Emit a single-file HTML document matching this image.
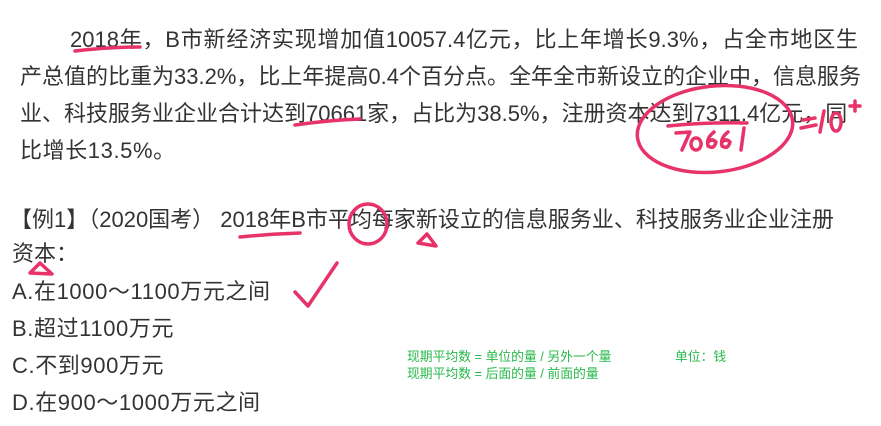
<!DOCTYPE html>
<html><head><meta charset="utf-8"><style>
body{margin:0;width:881px;height:426px;background:#fff;overflow:hidden;position:relative;font-family:"Liberation Sans","Noto Sans CJK SC",sans-serif;color:#333;}
.l{position:absolute;font-size:22px;line-height:24px;white-space:nowrap;}
.o{letter-spacing:0.6px;}
.j{text-align:justify;text-align-last:justify;}
.g{position:absolute;font-size:12.8px;line-height:15px;color:#27b84a;white-space:nowrap;}
svg{position:absolute;left:0;top:0;}
</style></head><body>
<div class="l j" style="left:70px;top:28px;width:788px">2018年，B市新经济实现增加值10057.4亿元，比上年增长9.3%，占全市地区生</div>
<div class="l j" style="left:20px;top:65px;width:836px">产总值的比重为33.2%，比上年提高0.4个百分点。全年全市新设立的企业中，信息服务</div>
<div class="l j" style="left:20px;top:102px;width:812px">业、科技服务业企业合计达到70661家，占比为38.5%，注册资本达到7311.4亿元，同</div>
<div class="l o" style="left:20px;top:139px">比增长13.5%。</div>
<div class="l j" style="left:10px;top:208px;width:818px">【例1】（2020国考） 2018年B市平均每家新设立的信息服务业、科技服务业企业注册</div>
<div class="l" style="left:12px;top:242px">资本：</div>
<div class="l o" style="left:12px;top:280px">A.在1000～1100万元之间</div>
<div class="l o" style="left:12px;top:317px">B.超过1100万元</div>
<div class="l o" style="left:12px;top:354px">C.不到900万元</div>
<div class="l o" style="left:12px;top:391px">D.在900～1000万元之间</div>
<div class="g" style="left:407px;top:349px">现期平均数 = 单位的量 / 另外一个量</div>
<div class="g" style="left:675px;top:349px">单位：钱</div>
<div class="g" style="left:407px;top:366px">现期平均数 = 后面的量 / 前面的量</div>
<svg width="881" height="426" fill="none" stroke="#e8336a" stroke-width="3.5" stroke-linecap="round" stroke-linejoin="round">
<path d="M75 51 Q110 47 140 47"/>
<path d="M295 125 Q330 120 360 119"/>
<path d="M668 126 Q708 122 747 123"/>
<ellipse cx="715" cy="129" rx="78" ry="43" transform="rotate(-6 715 129)"/>
<path d="M676 133 L690 132 L682 150"/>
<path d="M696 138 a5 6 0 1 0 0.1 0"/>
<path d="M714 132 q-8 6 -6 14 q6 4 8 -4 q-4 -4 -8 0"/>
<path d="M728 132 q-8 6 -6 14 q6 4 8 -4 q-4 -4 -8 0"/>
<path d="M744 128 L741 150"/>
<path d="M803 120 L815 118 M801 128 L816 125"/>
<path d="M824 111 L820 132"/>
<path d="M836 113 a5 9 0 1 0 0.1 0"/>
<path d="M850 106 L860 106 M855 101 L855 111"/>
<path d="M240 237 Q270 234 300 233"/>
<ellipse cx="368" cy="224" rx="19" ry="20"/>
<path d="M418 243 L427 234 L436 246 Z"/>
<path d="M30 273 L40 263 L52 274 Z"/>
<path d="M295 292 L308 306 L337 263"/>
</svg>
</body></html>
